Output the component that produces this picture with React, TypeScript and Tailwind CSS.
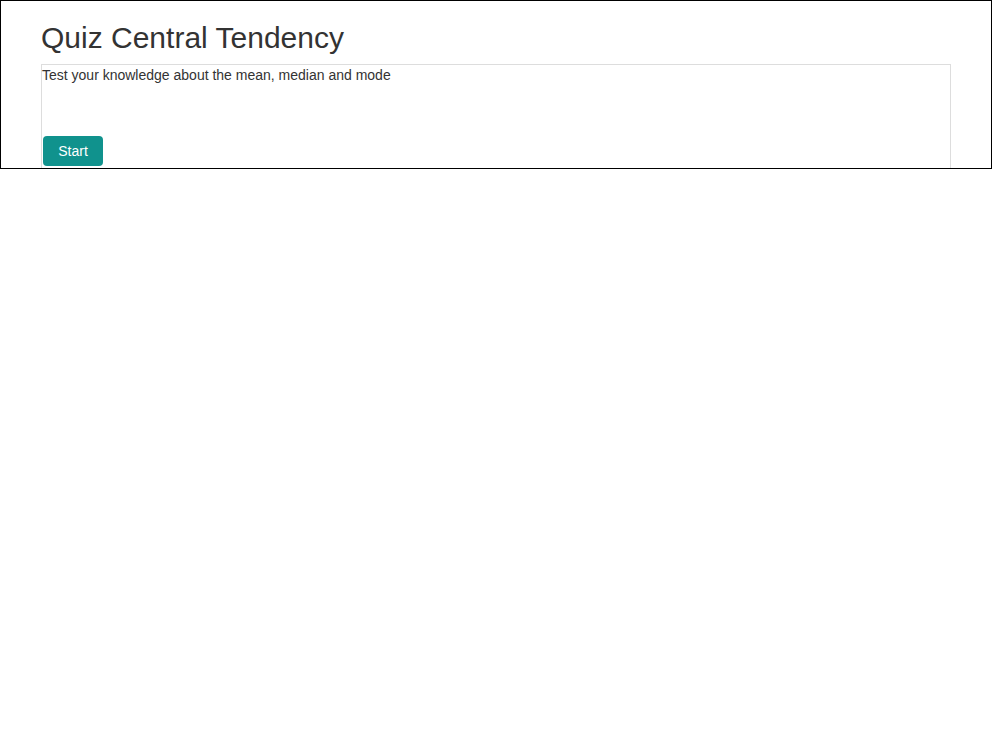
import React from 'react';

export default function App() {
  return (
    <div className="h-[169px] overflow-hidden border border-black bg-white px-10 font-['Liberation_Sans',Arial,sans-serif] text-[#333]">
      <h1 className="mt-5 mb-2.5 text-[30px] leading-[33px] font-normal">Quiz Central Tendency</h1>
      <div className="h-[160px] border border-[#ddd]">
        <p className="text-sm leading-5">Test your knowledge about the mean, median and mode</p>
        <button className="mt-[51px] ml-px h-[30px] w-[60px] rounded-[4px] bg-[#10928d] text-sm text-white">
          Start
        </button>
      </div>
    </div>
  );
}
